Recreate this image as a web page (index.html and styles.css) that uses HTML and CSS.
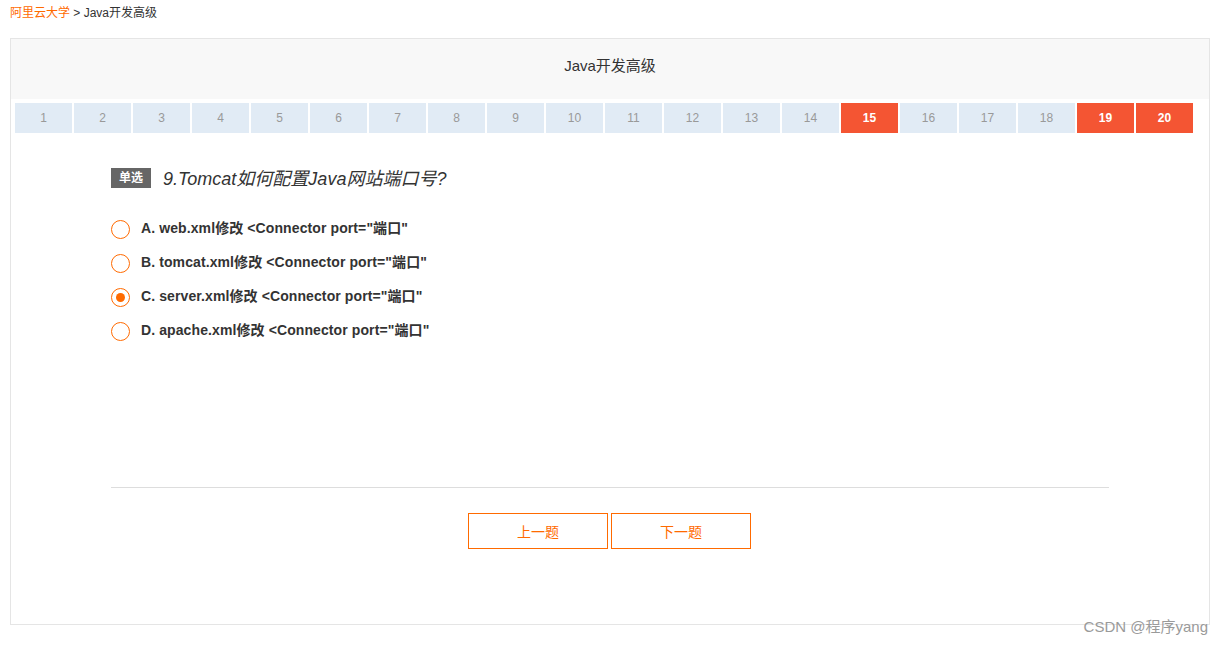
FILE: index.html
```html
<!DOCTYPE html>
<html lang="zh">
<head>
<meta charset="utf-8">
<title>Java开发高级</title>
<link rel="stylesheet" href="styles.css">
</head>
<body>
<div class="crumb"><a class="crumb-link">阿里云大学</a> &gt; Java开发高级</div>
<div class="box">
  <div class="box-head">Java开发高级</div>
  <div class="nav">
    <span class="cell">1</span><span class="cell">2</span><span class="cell">3</span><span class="cell">4</span><span class="cell">5</span><span class="cell">6</span><span class="cell">7</span><span class="cell">8</span><span class="cell">9</span><span class="cell">10</span><span class="cell">11</span><span class="cell">12</span><span class="cell">13</span><span class="cell">14</span><span class="cell active">15</span><span class="cell">16</span><span class="cell">17</span><span class="cell">18</span><span class="cell active">19</span><span class="cell active">20</span>
  </div>
  <div class="content">
    <div class="question">
      <span class="badge">单选</span>
      <span class="q-text">9.Tomcat如何配置Java网站端口号?</span>
    </div>
    <ul class="options">
      <li class="option"><span class="radio"></span><span class="opt-text">A. web.xml修改 &lt;Connector port="端口"</span></li>
      <li class="option"><span class="radio"></span><span class="opt-text">B. tomcat.xml修改 &lt;Connector port="端口"</span></li>
      <li class="option"><span class="radio checked"></span><span class="opt-text">C. server.xml修改 &lt;Connector port="端口"</span></li>
      <li class="option"><span class="radio"></span><span class="opt-text">D. apache.xml修改 &lt;Connector port="端口"</span></li>
    </ul>
    <div class="divider"></div>
    <div class="buttons">
      <button class="btn">上一题</button>
      <button class="btn">下一题</button>
    </div>
  </div>
</div>
<div class="watermark">CSDN @程序yang</div>
</body>
</html>
```
FILE: styles.css
```css
* { box-sizing: border-box; }
body {
  margin: 0;
  font-family: "Liberation Sans", Arial, "Noto Sans CJK SC", sans-serif;
  color: #333;
  background: #fff;
  position: relative;
  height: 645px;
}
.crumb {
  font-size: 12px;
  line-height: 17px;
  padding: 5px 10px 0;
  height: 38px;
  color: #333;
}
.crumb-link { color: #ff6a00; }
.box {
  margin: 0 12px 0 10px;
  border: 1px solid #e5e5e5;
  height: 587px;
}
.box-head {
  height: 60px;
  line-height: 54px;
  text-align: center;
  font-size: 15px;
  background: #f8f8f8;
  color: #333;
}
.nav {
  display: flex;
  gap: 2px;
  padding: 4px 4px 0;
}
.cell {
  width: 57px;
  height: 30px;
  line-height: 30px;
  text-align: center;
  font-size: 12px;
  color: #999;
  background: #e1ebf5;
}
.cell.active {
  background: #f45533;
  color: #fff;
  font-weight: bold;
}
.content {
  padding: 35px 100px 0;
}
.question {
  display: flex;
  align-items: center;
  height: 20px;
}
.badge {
  width: 40px;
  height: 20px;
  line-height: 20px;
  text-align: center;
  background: #666;
  color: #fff;
  font-size: 12px;
  font-weight: bold;
}
.q-text {
  margin-left: 12px;
  font-size: 18px;
  font-style: italic;
  color: #333;
  position: relative;
  top: -1px;
}
.options {
  list-style: none;
  margin: 23px 0 0;
  padding: 0;
  height: 276px;
}
.option {
  display: flex;
  align-items: center;
  height: 34px;
}
.radio {
  width: 19px;
  height: 19px;
  border: 1px solid #ff6a00;
  border-radius: 50%;
  position: relative;
  flex: none;
  top: 1px;
}
.radio.checked::after {
  content: "";
  position: absolute;
  left: 4px;
  top: 4px;
  width: 9px;
  height: 9px;
  border-radius: 50%;
  background: #ff6a00;
}
.opt-text {
  margin-left: 11px;
  font-size: 14px;
  font-weight: bold;
  color: #333;
  letter-spacing: 0.1px;
  position: relative;
  top: -1px;
}
.divider {
  height: 1px;
  background: #ddd;
}
.buttons {
  display: flex;
  justify-content: center;
  gap: 3px;
  margin-top: 25px;
  padding-right: 1px;
}
.btn {
  width: 140px;
  height: 36px;
  background: #fff;
  border: 1px solid #ff6a00;
  color: #ff6a00;
  font-family: "Liberation Sans", Arial, "Noto Sans CJK SC", sans-serif;
  font-size: 14px;
  padding: 0;
}
.watermark {
  position: absolute;
  right: 14px;
  top: 615px;
  font-size: 15px;
  color: #9a9a9a;
}
```
